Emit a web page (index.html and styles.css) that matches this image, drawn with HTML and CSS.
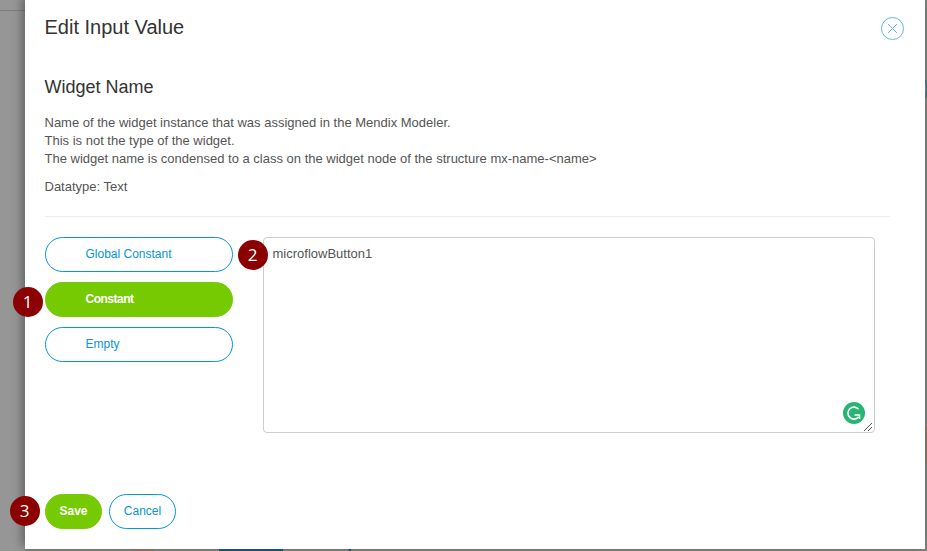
FILE: index.html
```html
<!DOCTYPE html>
<html lang="en">
<head>
<meta charset="utf-8">
<title>Edit Input Value</title>
<link rel="stylesheet" href="styles.css">
</head>
<body>
<svg class="backdrop" width="927" height="551" aria-hidden="true">
  <path d="M0 10.5H25M925 10.5h2M925 41.5h2M925 390.5h2M925 464.5h2M925 475.5h2M925 509.5h2M925 545.5h2" stroke="#7e7e7e"/>
  <path d="M925 426h2v38h-2zM131 549h22v2h-22z" fill="#8d7a68"/>
  <path d="M219 549h64v2h-64zM348 549h3v2h-2z" fill="#135c80"/>
  <path d="M925.500 80q3 9 0 18" fill="none" stroke="#2a6e8e"/>
</svg>
<main class="dialog">
  <header class="header">
    <h1>Edit Input Value</h1>
    <button class="close" aria-label="Close">
      <svg width="24" height="24" viewBox="0 0 24 24" fill="none" stroke="#5cb8e6"><circle cx="11.500" cy="12.500" r="11"/><path d="M7 8l9 9M16 8l-9 9"/></svg>
    </button>
  </header>
  <h2>Widget Name</h2>
  <p class="description">Name of the widget instance that was assigned in the Mendix Modeler.<br>This is not the type of the widget.<br>The widget name is condensed to a class on the widget node of the structure mx-name-&lt;name&gt;</p>
  <p class="datatype">Datatype: Text</p>
  <hr>
  <section class="editor">
    <div class="options">
      <button class="btn option">Global Constant</button>
      <button class="btn option primary">Constant</button>
      <button class="btn option">Empty</button>
    </div>
    <div class="field">
      <textarea spellcheck="false">microflowButton1</textarea>
      <svg class="checker" width="22" height="22" viewBox="0 0 22 22" fill="none"><circle cx="11" cy="11" r="11" fill="#27b573"/><path d="M15.500 7.200A6 6 0 1 0 15.500 15M11.500 13h5v4" stroke="#fff" stroke-width="1.600"/></svg>
      <svg class="grip" width="10" height="10" viewBox="0 0 10 10" stroke="#555" aria-hidden="true"><path d="M1 9L9 1M5 9l4-4"/></svg>
    </div>
  </section>
  <footer class="actions">
    <button class="btn save primary">Save</button>
    <button class="btn cancel">Cancel</button>
  </footer>
</main>
<span class="marker one">1</span>
<span class="marker two">2</span>
<span class="marker three">3</span>
</body>
</html>
```
FILE: styles.css
```css
* { box-sizing: border-box; }
body {
  margin: 0;
  position: relative;
  width: 927px;
  height: 551px;
  overflow: hidden;
  background: linear-gradient(90deg, #969696 0 25px, #838281 25px);
  font-family: "Liberation Sans", Arial, sans-serif;
  font-size: 13px;
  color: #555;
}
.backdrop { position: absolute; left: 0; top: 0; }
.dialog {
  position: relative;
  width: 900px;
  height: 549px;
  margin-left: 25px;
  padding: 14px 20px 0 19.500px;
  background: #fff;
  box-shadow: -3px -3px 9px rgba(0, 0, 0, .35);
}
.header { display: flex; justify-content: space-between; height: 62px; }
h1, h2 { margin: 0; font-weight: 400; color: #333; }
h1 { font-size: 20px; line-height: 26px; }
h2 { font-size: 18px; line-height: 22px; }
.close { width: 24px; height: 24px; margin: 2px 0 0; padding: 0; border: 0; background: none; }
.close svg { display: block; }
.description { margin: 16px 0 0; line-height: 18px; }
.datatype { margin: 10px 0 0; line-height: 18px; }
hr { width: 845px; height: 1px; margin: 20px 0; border: 0; background: #eee; }
.editor { display: flex; gap: 30px; padding-left: .5px; }
.options { display: flex; flex-direction: column; gap: 10px; width: 188px; }
.btn {
  height: 35px;
  padding: 0 0 1px;
  border: 1px solid #0595db;
  border-radius: 18px;
  background: #fff;
  color: #0595db;
  font: 12px "Liberation Sans", Arial, sans-serif;
}
.btn.primary { background: #76ca02; border-color: #76ca02; color: #fff; font-weight: 700; }
.btn.option { padding-left: 39.500px; text-align: left; }
.option.primary { letter-spacing: -.5px; }
.field { position: relative; width: 612px; height: 196px; }
textarea {
  display: block;
  width: 612px;
  height: 196px;
  padding: 7px 8px 8px 8.500px;
  border: 1px solid #ccc;
  border-radius: 4px;
  background: #fff;
  color: #555;
  font: 13px/18px "Liberation Sans", Arial, sans-serif;
  outline: 0;
  resize: none;
}
.checker { position: absolute; right: 10px; bottom: 9px; }
.grip { position: absolute; right: 2px; bottom: 1px; }
.actions { display: flex; gap: 7px; margin-top: 61px; padding-left: .5px; }
.save { width: 57px; }
.cancel { width: 67px; }
.marker {
  position: absolute;
  width: 30px;
  height: 30px;
  border-radius: 50%;
  background: #8b0000;
  color: #fff;
  font: 17px/30px "Open Sans", sans-serif;
  text-align: center;
}
.one { left: 12.500px; top: 286.500px; }
.two { left: 237.500px; top: 239.500px; }
.three { left: 9.500px; top: 495.500px; }
```
